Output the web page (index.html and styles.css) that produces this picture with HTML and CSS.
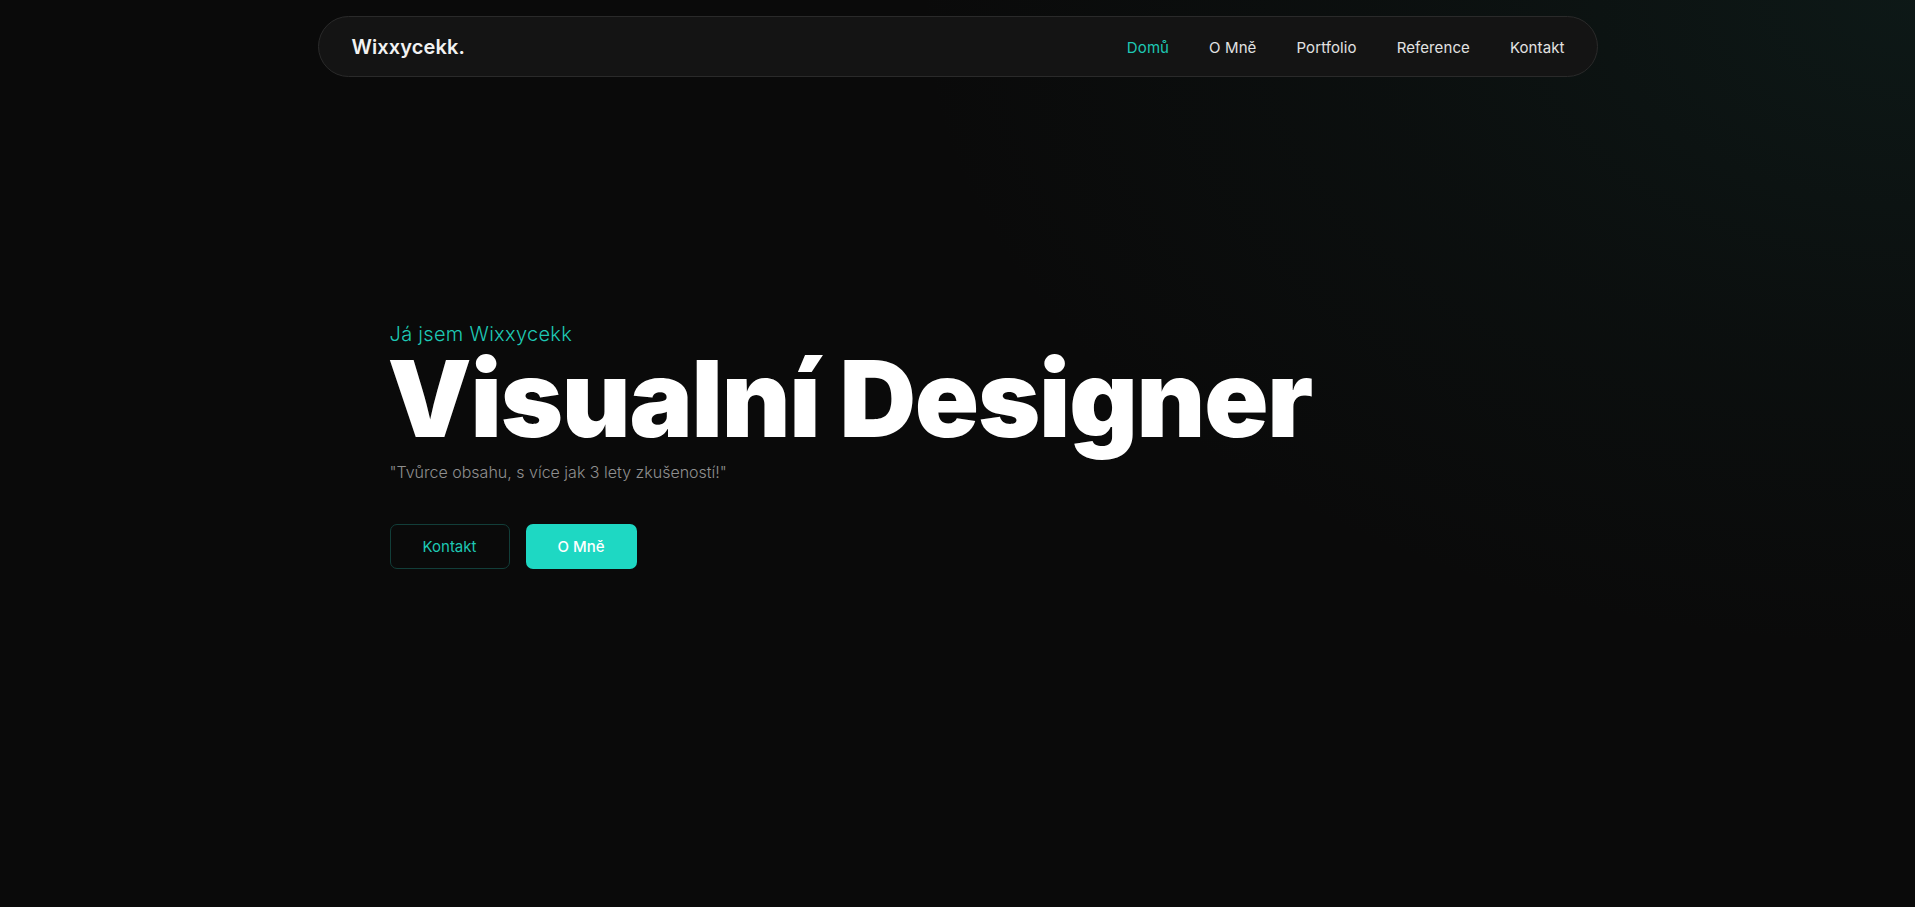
FILE: index.html
```html
<!DOCTYPE html>
<html lang="cs">
<head>
<meta charset="utf-8">
<title>Wixxycekk.</title>
<link rel="stylesheet" href="styles.css">
</head>
<body>
<div class="page">
  <header class="header">
    <nav class="nav">
      <a class="logo" href="#">Wixxycekk.</a>
      <ul class="menu">
        <li><a class="menu-link active" href="#">Domů</a></li>
        <li><a class="menu-link" href="#">O Mně</a></li>
        <li><a class="menu-link" href="#">Portfolio</a></li>
        <li><a class="menu-link" href="#">Reference</a></li>
        <li><a class="menu-link" href="#">Kontakt</a></li>
      </ul>
    </nav>
  </header>
  <main class="hero">
    <div class="hero-inner">
      <p class="pretitle">Já jsem Wixxycekk</p>
      <h1 class="title">Visualní Designer</h1>
      <p class="subtitle">"Tvůrce obsahu, s více jak 3 lety zkušeností!"</p>
      <div class="actions">
        <a class="btn btn-outline" href="#">Kontakt</a>
        <a class="btn btn-solid" href="#">O Mně</a>
      </div>
    </div>
  </main>
</div>
</body>
</html>
```
FILE: styles.css
```css
* { box-sizing: border-box; }
html, body { margin: 0; padding: 0; }
body {
  background-color: #0a0a0a;
  background-image:
    radial-gradient(ellipse 1000px 650px at 100% 0%, rgba(25, 75, 68, 0.22), rgba(25, 75, 68, 0.08) 55%, rgba(0,0,0,0) 100%);
  color: #fff;
  font-family: "Inter", "Noto Sans", sans-serif;
  min-height: 100vh;
}
a { text-decoration: none; color: inherit; }
.page { min-height: 100vh; }
.header {
  padding-top: 16px;
  display: flex;
  justify-content: center;
}
.nav {
  width: 1280px;
  height: 61px;
  border: 1px solid #2a2a2a;
  background: #141414;
  border-radius: 31px;
  display: flex;
  align-items: center;
  justify-content: space-between;
  padding: 0 32px 0 33px;
}
.logo {
  font-size: 20px;
  font-weight: 600;
  letter-spacing: 0.1px;
  color: #f2f2f2;
}
.menu {
  list-style: none;
  margin: 0;
  padding: 0;
  display: flex;
  gap: 40px;
}
.menu-link {
  font-size: 15px;
  font-weight: 400;
  letter-spacing: 0.1px;
  color: #e2e2e2;
}
.menu-link.active { color: #1ec8b4; }
.hero {
  display: flex;
  justify-content: center;
  padding-top: 246px;
}
.hero-inner { width: 1140px; padding-left: 2px; }
.pretitle {
  margin: 0;
  color: #1ec8b4;
  font-size: 20px;
  font-weight: 300;
  letter-spacing: 0.3px;
  line-height: 22px;
}
.title {
  margin: 1px 0 0 -2px;
  font-size: 106px;
  font-weight: 900;
  line-height: 106px;
  letter-spacing: -1.2px;
  color: #fff;
}
.subtitle {
  margin: 8px 0 0;
  color: #8f8f8f;
  font-size: 16px;
  font-weight: 300;
  line-height: 24px;
}
.actions {
  display: flex;
  gap: 16px;
  margin-top: 40px;
}
.btn {
  height: 45px;
  display: inline-flex;
  align-items: center;
  justify-content: center;
  border-radius: 7px;
  font-size: 15px;
}
.btn-outline {
  width: 120px;
  border: 1px solid #123e39;
  color: #1ec8b4;
}
.btn-solid {
  width: 111px;
  background: #1ed8c3;
  color: #fff;
  font-weight: 500;
}
```
